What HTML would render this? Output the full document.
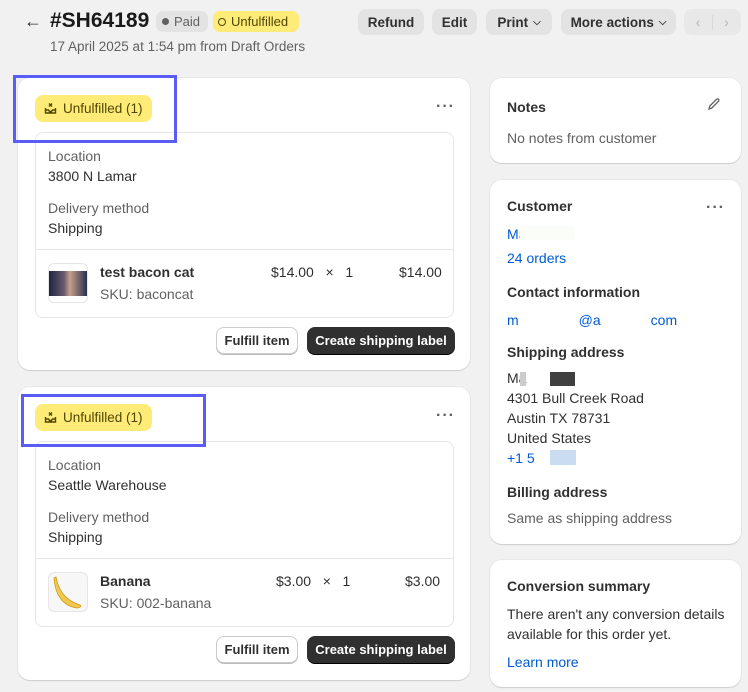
<!DOCTYPE html>
<html><head><meta charset="utf-8"><style>
*{box-sizing:border-box;margin:0;padding:0}
body{width:748px;height:692px;background:#f1f1f1;font-family:"Liberation Sans",sans-serif;color:#303030;position:relative;overflow:hidden;font-size:14px}
.a{position:absolute}
.card{position:absolute;background:#fff;border-radius:12px;box-shadow:0 1px 1px rgba(0,0,0,.12),0 0 0 1px rgba(0,0,0,.03)}
.btn{position:absolute;height:26px;top:9px;background:#e3e3e3;border-radius:8px;font-size:13.5px;font-weight:bold;color:#303030;display:flex;align-items:center;justify-content:center;gap:5px}
.badge{position:absolute;background:#ffeb78;border-radius:8px;height:27px;display:flex;align-items:center;gap:6px;padding:0 9px;font-size:13.5px;color:#4f4700}
.inner{position:absolute;left:17px;width:419px;border:1px solid #e6e6e6;border-radius:8px;height:186px}
.lbl{position:absolute;font-size:14px;color:#616161}
.val{position:absolute;font-size:14px;color:#303030}
.bold{font-weight:bold}
.blue{color:#005bd3}
.dots{position:absolute;font-size:16px;letter-spacing:1px;color:#616161;font-weight:bold}
.wbtn{position:absolute;height:27px;border-radius:8px;font-weight:bold;font-size:13px;display:flex;align-items:center;justify-content:center}
.purple{position:absolute;border:3px solid #5b5bf5}
</style></head><body>
<div class="a" style="left:24px;top:11px;font-size:18px">←</div>
<div class="a bold" style="left:50px;top:9px;font-size:21px;color:#1a1a1a">#SH64189</div>
<div class="a" style="left:156px;top:11px;width:52px;height:21px;background:#e3e3e3;border-radius:7px;font-size:13px;color:#616161;display:flex;align-items:center;padding-left:6px;gap:5px"><span style="width:7px;height:7px;border-radius:50%;background:#616161;display:inline-block"></span>Paid</div>
<div class="a" style="left:213px;top:11px;width:86px;height:21px;background:#ffeb78;border-radius:7px;font-size:13px;color:#4f4700;display:flex;align-items:center;padding-left:5px;gap:5px"><span style="width:8px;height:8px;border-radius:50%;border:1.5px solid #4f4700;display:inline-block"></span>Unfulfilled</div>
<div class="a" style="left:50px;top:39px;font-size:13.5px;color:#616161">17 April 2025 at 1:54 pm from Draft Orders</div>
<div class="btn" style="left:358px;width:66px">Refund</div>
<div class="btn" style="left:432px;width:45px">Edit</div>
<div class="btn" style="left:486px;width:66px">Print <span style="font-size:10px">⌵</span></div>
<div class="btn" style="left:561px;width:115px">More actions <span style="font-size:10px">⌵</span></div>
<div class="btn" style="left:684px;width:57px;background:#e8e8e8;color:#b5b5b5;font-weight:normal;gap:0"><span style="width:28px;text-align:center;border-right:1px solid #d8d8d8">‹</span><span style="width:28px;text-align:center">›</span></div>

<!-- card 1 -->
<div class="card" style="left:18px;top:78px;width:452px;height:292px">
<div class="badge" style="left:17px;top:17px"><svg width="13" height="13" viewBox="0 0 13 13" fill="none" stroke="#4f4700" stroke-width="1.4"><path d="M1.5 6v5h10V6M1.5 8h3l1 1.5h2L8.5 8h3M5 1.5l3 3M8 1.5l-3 3"/></svg>Unfulfilled (1)</div>
<div class="dots" style="left:418px;top:20px">···</div>
<div class="inner" style="top:54px">
<div class="lbl" style="left:12px;top:15px">Location</div>
<div class="val" style="left:12px;top:35px">3800 N Lamar</div>
<div class="lbl" style="left:12px;top:67px">Delivery method</div>
<div class="val" style="left:12px;top:87px">Shipping</div>
<div class="a" style="left:0;right:0;top:116px;border-top:1px solid #e6e6e6"></div>
<div class="a" style="left:12px;top:130px;width:40px;height:40px;border:1px solid #e6e6e6;border-radius:6px;overflow:hidden;background:#fff"><div style="margin-top:7px;height:25px;background:linear-gradient(90deg,#1d2540,#6a5a70 40%,#c9a08a 55%,#263050)"></div></div>
<div class="val" style="left:64px;top:131px;font-weight:bold">test bacon cat</div>
<div class="lbl" style="left:64px;top:153px">SKU: baconcat</div>
<div class="val" style="left:235px;top:131px">$14.00 &nbsp;&nbsp;×&nbsp;&nbsp; 1</div>
<div class="val" style="left:363px;top:131px">$14.00</div>
</div>
<div class="wbtn" style="left:198px;top:249px;width:82px;border:1px solid #ccc;background:#fff;box-shadow:0 1px 0 #bbb">Fulfill item</div>
<div class="wbtn" style="left:289px;top:249px;width:148px;background:#303030;color:#fff;box-shadow:0 1px 0 #000">Create shipping label</div>
</div>
<div class="purple" style="left:13px;top:75px;width:164px;height:68px"></div>

<!-- card 2 -->
<div class="card" style="left:18px;top:387px;width:452px;height:293px">
<div class="badge" style="left:17px;top:17px"><svg width="13" height="13" viewBox="0 0 13 13" fill="none" stroke="#4f4700" stroke-width="1.4"><path d="M1.5 6v5h10V6M1.5 8h3l1 1.5h2L8.5 8h3M5 1.5l3 3M8 1.5l-3 3"/></svg>Unfulfilled (1)</div>
<div class="dots" style="left:418px;top:20px">···</div>
<div class="inner" style="top:54px">
<div class="lbl" style="left:12px;top:15px">Location</div>
<div class="val" style="left:12px;top:35px">Seattle Warehouse</div>
<div class="lbl" style="left:12px;top:67px">Delivery method</div>
<div class="val" style="left:12px;top:87px">Shipping</div>
<div class="a" style="left:0;right:0;top:116px;border-top:1px solid #e6e6e6"></div>
<div class="a" style="left:12px;top:130px;width:40px;height:40px;border:1px solid #e6e6e6;border-radius:6px;background:#f7f7f7"><svg width="38" height="38" viewBox="0 0 38 38"><path d="M7 4c2 10 6 22 24 28 2 1 0 3-3 3C14 33 6 22 5 5z" fill="#f2c94c" stroke="#c99a1c" stroke-width=".8"/></svg></div>
<div class="val" style="left:64px;top:131px;font-weight:bold">Banana</div>
<div class="lbl" style="left:64px;top:153px">SKU: 002-banana</div>
<div class="val" style="left:240px;top:131px">$3.00 &nbsp;&nbsp;×&nbsp;&nbsp; 1</div>
<div class="val" style="left:369px;top:131px">$3.00</div>
</div>
<div class="wbtn" style="left:198px;top:249px;width:82px;border:1px solid #ccc;background:#fff;box-shadow:0 1px 0 #bbb">Fulfill item</div>
<div class="wbtn" style="left:289px;top:249px;width:148px;background:#303030;color:#fff;box-shadow:0 1px 0 #000">Create shipping label</div>
</div>
<div class="purple" style="left:21px;top:394px;width:185px;height:53px"></div>

<!-- notes -->
<div class="card" style="left:490px;top:78px;width:251px;height:85px">
<div class="val bold" style="left:17px;top:21px">Notes</div>
<svg class="a" style="left:217px;top:19px" width="14" height="14" viewBox="0 0 14 14" fill="none" stroke="#616161" stroke-width="1.3"><path d="M2 12l.8-3L9.5 2.3a1.4 1.4 0 012 2L4.8 11z"/></svg>
<div class="lbl" style="left:17px;top:52px">No notes from customer</div>
</div>

<!-- customer -->
<div class="card" style="left:490px;top:180px;width:251px;height:364px">
<div class="val bold" style="left:17px;top:18px">Customer</div>
<div class="dots" style="left:216px;top:19px">···</div>
<div class="val blue" style="left:17px;top:46px">M<span style="color:#8aa">a</span></div>
<div class="a" style="left:30px;top:46px;width:55px;height:14px;background:#fbfdf8"></div>
<div class="val blue" style="left:17px;top:70px">24 orders</div>
<div class="val bold" style="left:17px;top:104px">Contact information</div>
<div class="val blue" style="left:17px;top:132px">m<span style="display:inline-block;width:60px"></span>@a<span style="display:inline-block;width:50px"></span>com</div>
<div class="val bold" style="left:17px;top:164px">Shipping address</div>
<div class="val" style="left:17px;top:190px">Ma</div>
<div class="a" style="left:30px;top:192px;width:6px;height:14px;background:#ccc"></div>
<div class="a" style="left:60px;top:192px;width:25px;height:14px;background:#404040"></div>
<div class="val" style="left:17px;top:210px">4301 Bull Creek Road</div>
<div class="val" style="left:17px;top:230px">Austin TX 78731</div>
<div class="val" style="left:17px;top:250px">United States</div>
<div class="val blue" style="left:17px;top:270px">+1 5</div>
<div class="a" style="left:60px;top:270px;width:26px;height:15px;background:#c9dcf0"></div>
<div class="val bold" style="left:17px;top:304px">Billing address</div>
<div class="lbl" style="left:17px;top:330px">Same as shipping address</div>
</div>

<!-- conversion -->
<div class="card" style="left:490px;top:560px;width:251px;height:127px">
<div class="val bold" style="left:17px;top:18px">Conversion summary</div>
<div class="val" style="left:17px;top:44px;width:232px;line-height:20px">There aren't any conversion details available for this order yet.</div>
<div class="val blue" style="left:17px;top:94px">Learn more</div>
</div>
</body></html>
